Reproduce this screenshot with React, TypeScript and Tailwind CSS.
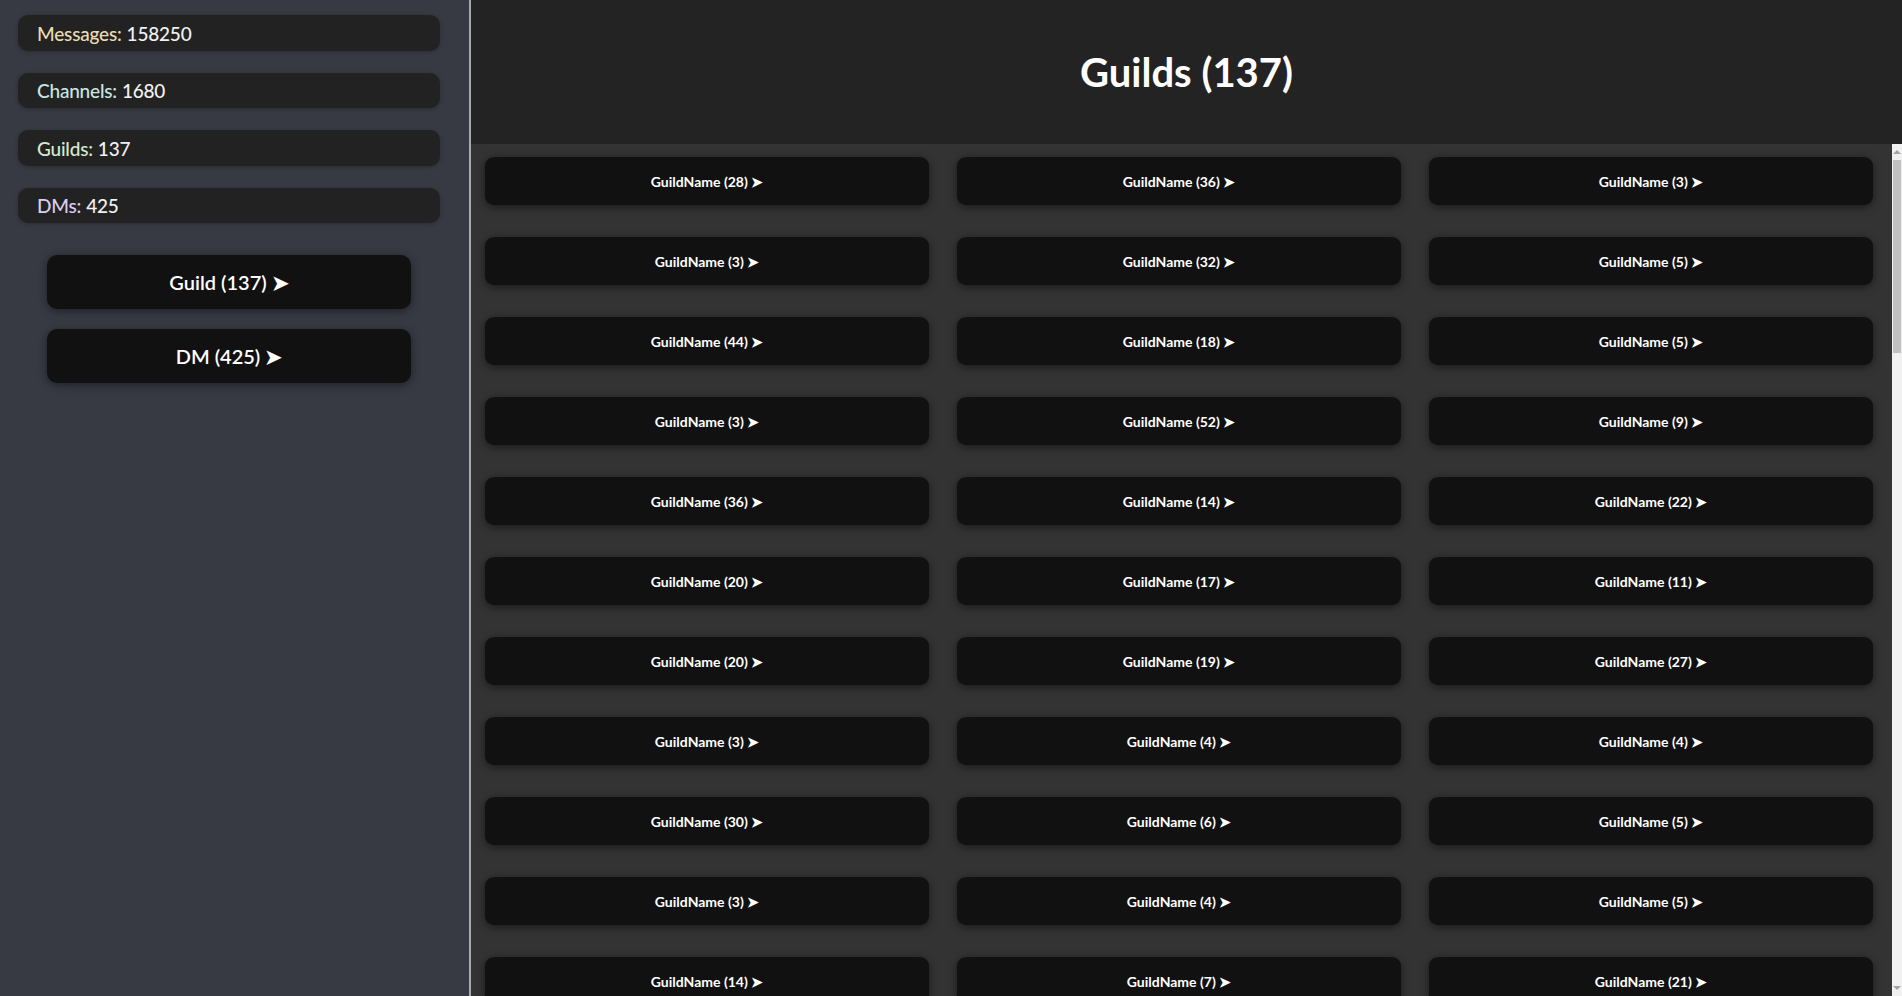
import React from "react";

const stats = [
  { label: "Messages:", value: "158250", color: "text-[#ecdcb4]" },
  { label: "Channels:", value: "1680", color: "text-[#c9e6e4]" },
  { label: "Guilds:", value: "137", color: "text-[#d3ead0]" },
  { label: "DMs:", value: "425", color: "text-[#dccdf3]" },
];

// first rows as seen, rest filled in
const known = [
  28, 36, 3, 3, 32, 5, 44, 18, 5, 3, 52, 9, 36, 14, 22, 20, 17, 11, 20, 19, 27,
  3, 4, 4, 30, 6, 5, 3, 4, 5, 14, 7, 21,
];

function buildGuilds() {
  const list: number[] = [...known];
  let seed = 17;
  while (list.length < 137) {
    seed = (seed * 73 + 41) % 997;
    list.push((seed % 48) + 1);
  }
  return list;
}

const guilds = buildGuilds();

const font = "font-['Lato','Noto_Sans',sans-serif]";

export default function App() {
  return (
    <div className={`flex h-screen w-full overflow-hidden ${font}`}>
      <aside className="flex h-full w-[469px] shrink-0 flex-col bg-[#373a43] pt-[15px]">
        <div className="ml-[18px] flex w-[422px] flex-col gap-[22px]">
          {stats.map((s) => (
            <div
              key={s.label}
              className="flex h-[35.5px] items-center rounded-[10px] bg-[#222222] pl-[19px] pt-[2px] text-[19px] font-medium tracking-[-0.2px] shadow-[0_1px_4px_rgba(0,0,0,0.25)]"
            >
              <span className={s.color}>{s.label}</span>
              <span className="ml-[5px] text-[#f2f2f2]">{s.value}</span>
            </div>
          ))}
        </div>
        <div className="ml-[18px] mt-[32px] flex w-[422px] flex-col items-center gap-[20px]">
          <button className="h-[54px] w-[364px] rounded-[10px] bg-[#111111] text-[20px] font-semibold text-white shadow-[0_2px_10px_rgba(0,0,0,0.45)]">
            Guild (137) ➤
          </button>
          <button className="h-[54px] w-[364px] rounded-[10px] bg-[#111111] text-[20px] font-semibold text-white shadow-[0_2px_10px_rgba(0,0,0,0.45)]">
            DM (425) ➤
          </button>
        </div>
      </aside>
      <div className="w-[2px] shrink-0 bg-[#a9a9a9]" />
      <main className="flex h-full min-w-0 flex-1 flex-col">
        <header className="flex h-[144px] shrink-0 items-center justify-center bg-[#232323]">
          <h1 className="text-[40px] font-bold text-white">Guilds (137)</h1>
        </header>
        <div className="flex min-h-0 flex-1">
          <div className="min-w-0 flex-1 overflow-hidden bg-[#333333]">
            <div className="grid grid-cols-[444px_444px_444px] gap-x-[28px] gap-y-[32px] pb-[14px] pl-[14px] pt-[13px]">
              {guilds.map((n, i) => (
                <button
                  key={i}
                  className="flex h-[48px] items-center justify-center rounded-[9px] bg-[#111111] text-[14px] font-bold text-white shadow-[0_2px_8px_rgba(0,0,0,0.5)]"
                >
                  GuildName ({n}) ➤
                </button>
              ))}
            </div>
          </div>
          {/* scrollbar */}
          <div className="flex w-[10px] shrink-0 flex-col bg-[#f1f1f1]">
            <div className="flex h-[16px] items-center justify-center">
              <div className="h-0 w-0 border-x-[4px] border-b-[4px] border-x-transparent border-b-[#a3a3a3]" />
            </div>
            <div className="mx-[1px] h-[193px] bg-[#c1c1c1]" />
            <div className="flex-1" />
            <div className="flex h-[16px] items-center justify-center">
              <div className="h-0 w-0 border-x-[4px] border-t-[4px] border-x-transparent border-t-[#a3a3a3]" />
            </div>
          </div>
        </div>
      </main>
    </div>
  );
}
